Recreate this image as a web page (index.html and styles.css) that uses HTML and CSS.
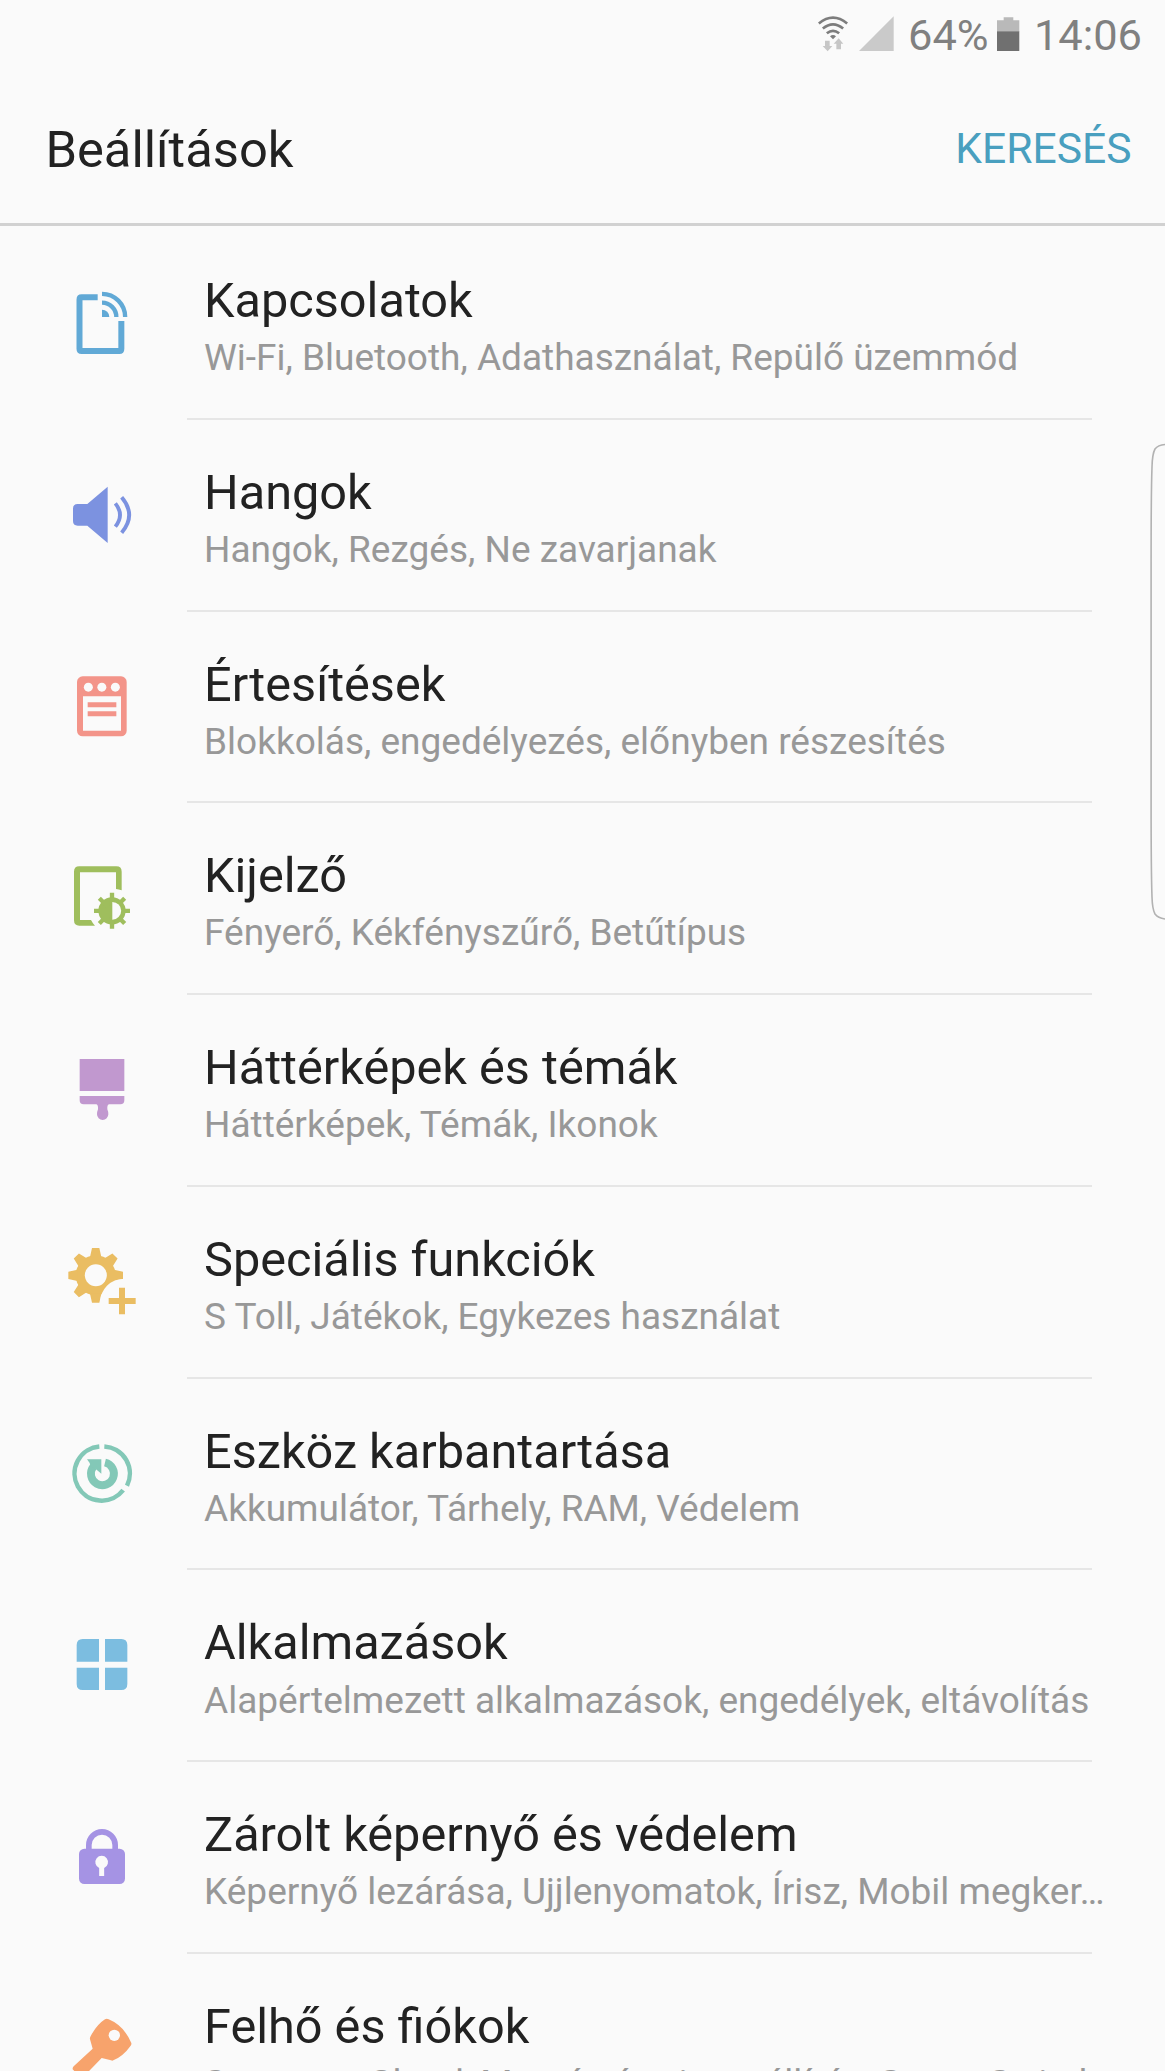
FILE: index.html
```
<!DOCTYPE html>
<html lang="hu">
<head>
<meta charset="utf-8">
<title>Beállítások</title>
<link rel="stylesheet" href="styles.css">
</head>
<body>
<div class="status">
  <svg class="wifi" viewBox="96 29 93 153">
    <g fill="none" stroke="#7d7d7d" stroke-width="8">
      <path d="M98.500 69.500Q141 34.500 183.500 69.500"/>
      <path d="M110.500 84.500Q141 59.500 171.500 84.500"/>
      <path d="M122.500 99Q141 84 159.500 99"/>
    </g>
    <path d="M132 107.500Q141 100 150 107.500L141 117Z" fill="#7d7d7d"/>
    <path d="M117 121h14v16h8l-14 16-15-16h7zM151 147v-17h-8l15-16 14 16h-7v17z" fill="#c6c6c6"/>
  </svg>
  <svg class="signal" viewBox="220 29 104 153"><path d="M220 152L324 48V152Z" fill="#cacaca"/></svg>
  <span class="percent">64%</span>
  <svg class="battery" viewBox="635 29 67 153">
    <path d="M635 60h20v-9h29v9h18v34h-67z" fill="#b9b9b9"/>
    <path d="M635 93h67v59h-67z" fill="#707070"/>
  </svg>
  <span>14:06</span>
</div>
<header class="header">
  <h1>Beállítások</h1>
  <a class="search">KERESÉS</a>
</header>
<ul class="list">
  <li class="row">
    <svg class="icon" viewBox="66 69 240 240" fill="none" stroke="#61a9d6">
      <path d="M173 112H125Q118.500 112 118.500 119V266Q118.500 273 125 273H238Q244 273 244 266V183" stroke-width="18"/>
      <path d="M186 128A43 43 0 0 1 229 171M186 101.500A69.500 69.500 0 0 1 255.500 171" stroke-width="13"/>
      <path d="M186 149A22 22 0 0 1 208 171H186Z" fill="#61a9d6" stroke="none"/>
    </svg>
    <div class="text"><h2>Kapcsolatok</h2><p>Wi-Fi, Bluetooth, Adathasználat, Repülő üzemmód</p></div>
  </li>
  <li class="row">
    <svg class="icon" viewBox="66 644 240 240" fill="#7c92e0">
      <path d="M142 731L203 679V848L142 796H113Q99 796 99 782V745Q99 731 113 731Z"/>
      <path d="M226 729Q254 764 226 799M245 711Q290 764 245 817" fill="none" stroke="#7c92e0" stroke-width="11.500"/>
    </svg>
    <div class="text"><h2>Hangok</h2><p>Hangok, Rezgés, Ne zavarjanak</p></div>
  </li>
  <li class="row">
    <svg class="icon" viewBox="66 50 240 240" fill="#f39489">
      <rect x="111" y="78" width="149" height="180" rx="17"/>
      <g fill="#fafafa"><circle cx="145" cy="110.500" r="13.500"/><circle cx="185.500" cy="110.500" r="13.500"/><circle cx="226" cy="110.500" r="13.500"/><path d="M129 138H243V241H129Z"/></g>
      <path d="M143 156H229V171H143ZM143 183H229V198H143Z"/>
    </svg>
    <div class="text"><h2>Értesítések</h2><p>Blokkolás, engedélyezés, előnyben részesítés</p></div>
  </li>
  <li class="row">
    <svg class="icon" viewBox="66 625 240 240" fill="#9fbe5d">
      <path d="M118 650H229Q245 650 245 666V722Q236 719 228 718V668H120V811H153Q158 821 165 828H118Q102 828 102 812V666Q102 650 118 650Z"/>
      <circle cx="216" cy="783.500" r="41"/>
      <path d="M216 729.500V837.500M162 783.500H270M178 745.500L254 821.500M254 745.500L178 821.500" stroke="#9fbe5d" stroke-width="13"/>
      <path d="M217 757A26.500 26.500 0 0 1 217 810Z" fill="#fafafa"/>
    </svg>
    <div class="text"><h2>Kijelző</h2><p>Fényerő, Kékfényszűrő, Betűtípus</p></div>
  </li>
  <li class="row">
    <svg class="icon" viewBox="66 60 240 240" fill="#c198cf">
      <path d="M119 87H253V183H119ZM119 198H253V211Q253 223 241 223H207Q201 225 202 238Q205 245 205 253A17 17 0 0 1 171 253Q171 245 174 238Q175 225 169 223H131Q119 223 119 211Z"/>
    </svg>
    <div class="text"><h2>Háttérképek és témák</h2><p>Háttérképek, Témák, Ikonok</p></div>
  </li>
  <li class="row">
    <svg class="icon" viewBox="66 636 240 240" fill="#eabd62">
      <circle cx="167" cy="736" r="60"/>
      <path d="M156 654H178L184 681H150ZM156 818H178L184 791H150Z"/>
      <path d="M156 654H178L184 681H150ZM156 818H178L184 791H150Z" transform="rotate(45 167 736)"/>
      <path d="M156 654H178L184 681H150ZM156 818H178L184 791H150Z" transform="rotate(90 167 736)"/>
      <path d="M156 654H178L184 681H150ZM156 818H178L184 791H150Z" transform="rotate(135 167 736)"/>
      <circle cx="167.500" cy="736" r="33" fill="#fafafa"/>
      <circle cx="249" cy="815" r="68" fill="#fafafa"/>
      <path d="M237 773H255V804H287V822H255V853H237V822H206V804H237Z"/>
    </svg>
    <div class="text"><h2>Speciális funkciók</h2><p>S Toll, Játékok, Egykezes használat</p></div>
  </li>
  <li class="row">
    <svg class="icon" viewBox="66 71 240 240" fill="none" stroke="#83c8b7">
      <path d="M193 108.300A81.500 81.500 0 0 1 261 226M249.500 239.500A81.500 81.500 0 1 1 178 108.300" stroke-width="13.500"/>
      <path d="M195 156.500A34.500 34.500 0 1 1 160 169" stroke-width="23.500"/>
      <path d="M141 147H184V190L168 177L151 167Q151 158 141 147Z" fill="#83c8b7" stroke="none"/>
    </svg>
    <div class="text"><h2>Eszköz karbantartása</h2><p>Akkumulátor, Tárhely, RAM, Védelem</p></div>
  </li>
  <li class="row">
    <svg class="icon" viewBox="66 645 240 240" fill="#7cbde0">
      <path d="M177 687V755H110V705Q110 687 128 687ZM195 687H244Q262 687 262 705V755H195ZM110 773H177V840H128Q110 840 110 822ZM195 773H262V822Q262 840 244 840H195Z"/>
    </svg>
    <div class="text"><h2>Alkalmazások</h2><p>Alapértelmezett alkalmazások, engedélyek, eltávolítás</p></div>
  </li>
  <li class="row">
    <svg class="icon" viewBox="66 51 240 240" fill="#a593e4">
      <rect x="117" y="146" width="138" height="106" rx="16"/>
      <path d="M146.500 150V135A39.500 39.500 0 0 1 225.500 135V150" fill="none" stroke="#a593e4" stroke-width="17"/>
      <path d="M177.500 204A19 19 0 1 1 192.500 204V228H177.500Z" fill="#fafafa"/>
    </svg>
    <div class="text"><h2>Zárolt képernyő és védelem</h2><p>Képernyő lezárása, Ujjlenyomatok, Írisz, Mobil megker…</p></div>
  </li>
  <li class="row">
    <svg class="icon" viewBox="66 627 240 240" fill="#f7a36c">
      <path d="M195 658Q200 655 206 658Q252 677 274 729Q275 733 272 737Q250 768 220 781Q217 783 213 781L185 774L125 836L98 808Q97 804 101 799L158 746L150 718Q149 714 151 710Q170 674 195 658Z"/>
      <circle cx="223" cy="706" r="17" fill="#fafafa"/>
    </svg>
    <div class="text"><h2>Felhő és fiókok</h2><p>Samsung Cloud, Mentés és visszaállítás, Smart Switch</p></div>
  </li>
</ul>
<svg class="edge" viewBox="0 0 16 480"><path d="M16 2.500Q9 3 6 7Q3.300 12 3 25Q2.100 50 2.100 120V360Q2.100 430 3 455Q3.300 467 6 472Q9 476 16 477" fill="none" stroke="#b2b2b2" stroke-width="1.600"/></svg>
</body>
</html>
```
FILE: styles.css
```
* { box-sizing: border-box; margin: 0; padding: 0; }
body {
  position: relative;
  width: 1165px;
  height: 2071px;
  overflow: hidden;
  background: #fafafa;
  color: #222;
  font-family: Roboto, "Liberation Sans", sans-serif;
}
svg { display: block; flex: none; }
.status {
  display: flex;
  justify-content: flex-end;
  height: 70px;
  padding: 10px 23px 0 0;
  font-size: 43.4px;
  line-height: 52px;
  color: #808080;
}
.status svg { height: 51px; }
.wifi { width: 31px; margin-right: 10.3px; }
.signal { width: 34.7px; margin-right: 14.1px; }
.battery { width: 22.3px; margin: 0 14.4px 0 8.6px; }
.header {
  display: flex;
  justify-content: space-between;
  height: 156px;
  padding: 50px 33.5px 0 45.4px;
  border-bottom: 3px solid #d1d1d1;
}
.header h1 { font-size: 50.7px; font-weight: 400; line-height: 60px; }
.search { padding-top: 3px; font-size: 42.6px; line-height: 50px; color: #499fbf; }
.list { list-style: none; padding-top: 2px; }
.row { display: flex; height: 191.77px; }
.icon { width: 80px; height: 80px; margin: 55px 45px 0 62px; }
.text {
  width: 905px;
  padding: 44px 0 0 17px;
  border-bottom: 2px solid #e6e6e6;
  white-space: nowrap;
}
.text h2 { font-size: 48.65px; font-weight: 400; line-height: 58px; }
.text p { margin-top: 6.2px; font-size: 37px; line-height: 44px; color: #989898; }
.edge { position: absolute; right: 0; top: 442px; width: 16px; height: 480px; }
```
